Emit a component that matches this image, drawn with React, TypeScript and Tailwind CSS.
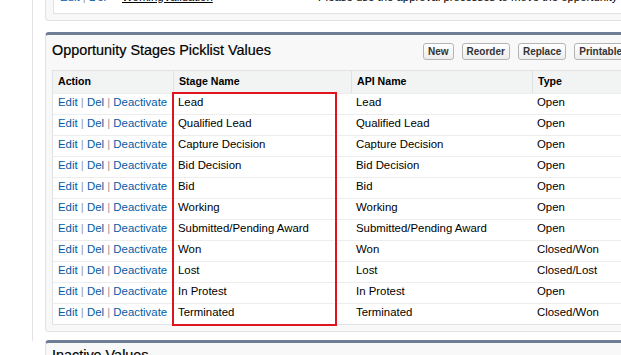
const stages: [string, string][] = [
  ["Lead", "Open"],
  ["Qualified Lead", "Open"],
  ["Capture Decision", "Open"],
  ["Bid Decision", "Open"],
  ["Bid", "Open"],
  ["Working", "Open"],
  ["Submitted/Pending Award", "Open"],
  ["Won", "Closed/Won"],
  ["Lost", "Closed/Lost"],
  ["In Protest", "Open"],
  ["Terminated", "Closed/Won"],
];

const cols = "grid grid-cols-[120px_178px_181px_120px]";

function Btn({ label }: { label: string }) {
  return (
    <button className="h-[17px] rounded-[3px] border border-[#b5b5b5] bg-gradient-to-b from-white to-[#ededed] px-[4px] text-[10px] font-bold leading-[15px] text-[#333]">
      {label}
    </button>
  );
}

function ActionLinks() {
  return (
    <span className="text-[#015ba7]">
      Edit <span className="text-[#999]">|</span> Del <span className="text-[#999]">|</span> Deactivate
    </span>
  );
}

export default function App() {
  return (
    <div className="h-[355px] w-[621px] overflow-hidden bg-white font-['Liberation_Sans',Arial,sans-serif] text-[11.4px] text-black">
      <div className="ml-[32px] h-full w-[700px] border-l border-[#e3e3e3] pl-[12px]">
        {/* previous section, cut off at the top */}
        <div className="-mt-[14px] rounded-b-[4px] border border-t-0 border-[#e0e3e5] bg-[#f8f8f8] pb-[6px] pl-[7px]">
          <div className="flex h-[28px] items-end border border-t-0 border-[#e0e3e5] bg-white pb-[7px]">
            <span className="w-[68px] pl-[6px] text-[#015ba7]">
              Edit <span className="text-[#999]">|</span> Del
            </span>
            <span className="w-[196px] text-black underline">WorkingValidation</span>
            <span className="text-black">Please use the approval processes to move the opportunity</span>
          </div>
        </div>

        {/* picklist values */}
        <div className="mt-[11px] rounded-[4px] border border-t-[3px] border-[#e0e3e5] border-t-[#6f7d95] bg-[#f8f8f8] pb-[6px] pl-[6px]">
          <div className="flex h-[32px] items-center">
            <h2 className="w-[371px] text-[14.4px] text-black [-webkit-text-stroke:0.2px_black]">
              Opportunity Stages Picklist Values
            </h2>
            <div className="flex gap-[8px]">
              <Btn label="New" />
              <Btn label="Reorder" />
              <Btn label="Replace" />
              <Btn label="Printable View" />
            </div>
          </div>
          <div className="relative mt-[3px] border border-[#e0e3e5] bg-white">
            <div className={`${cols} h-[22px] items-center bg-[#f2f3f3] text-[10.6px] font-bold text-black`}>
              <div className="pl-[5px]">Action</div>
              <div className="flex h-full items-center border-l border-[#e0e3e5] pl-[5px]">Stage Name</div>
              <div className="flex h-full items-center border-l border-[#e0e3e5] pl-[5px]">API Name</div>
              <div className="flex h-full items-center border-l border-[#e0e3e5] pl-[5px]">Type</div>
            </div>
            {stages.map(([name, type]) => (
              <div key={name} className={`${cols} h-[21px] items-center border-t border-[#ededed] pb-[2px]`}>
                <div className="pl-[5px]">
                  <ActionLinks />
                </div>
                <div className="pl-[5px] text-black">{name}</div>
                <div className="pl-[5px] text-black">{name}</div>
                <div className="pl-[5px] text-black">{type}</div>
              </div>
            ))}
            {/* highlight around the stage name column */}
            <div className="pointer-events-none absolute left-[119px] top-[21px] h-[234px] w-[165px] border-2 border-[#e0141e]" />
          </div>
        </div>

        {/* inactive values */}
        <div className="mt-[8px] rounded-[4px] border border-t-[3px] border-[#e0e3e5] border-t-[#6f7d95] bg-[#f8f8f8] pl-[6px]">
          <h2 className="pt-[2px] text-[14.4px] text-black [-webkit-text-stroke:0.2px_black]">Inactive Values</h2>
        </div>
      </div>
    </div>
  );
}
